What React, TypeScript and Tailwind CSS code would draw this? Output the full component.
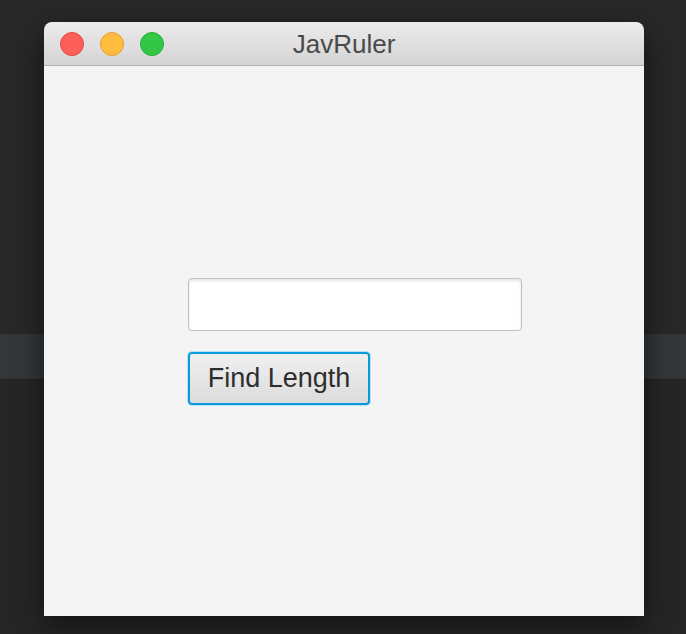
import React from "react";

export default function App() {
  return (
    <div className="relative w-[686px] h-[634px] overflow-hidden bg-[#282828]" style={{ fontFamily: '"Liberation Sans", Arial, sans-serif' }}>
      <div className="flex flex-col h-full">
        <div className="h-[334px] bg-[#282828]" />
        <div className="h-[46px] bg-[#33373a] border-b border-[#1f2122]" />
        <div className="flex-1 bg-[#262626]" />
      </div>
      <div className="absolute left-[44px] top-[22px] w-[600px] h-[594px] flex flex-col rounded-t-[8px] overflow-hidden shadow-[0_10px_30px_rgba(0,0,0,0.55)]">
        <div className="relative h-[44px] shrink-0 flex items-center bg-gradient-to-b from-[#ececec] to-[#d4d4d4] border-b border-[#b3b3b3]">
          <div className="flex items-center gap-[16px] pl-[16px]">
            <div className="w-[24px] h-[24px] rounded-full bg-[#fc5f58] border border-[#e2463f]" />
            <div className="w-[24px] h-[24px] rounded-full bg-[#febd3f] border border-[#e1a22c]" />
            <div className="w-[24px] h-[24px] rounded-full bg-[#33c748] border border-[#25ab34]" />
          </div>
          <div className="absolute inset-0 flex items-center justify-center text-[26px] text-[#4a4a4a] leading-none pt-[1px]">
            JavRuler
          </div>
        </div>
        <div className="flex-1 bg-[#f4f4f4] flex flex-col items-start pl-[144px] pt-[212px]">
          <div className="w-[334px] h-[53px] rounded-[4px] border border-[#bfbfbf] bg-white shadow-[inset_0_2px_3px_rgba(0,0,0,0.10)]" />
          <button className="mt-[21px] w-[182px] h-[53px] rounded-[4px] border-2 border-[#0a9bdc] bg-gradient-to-b from-[#f0f0f0] to-[#dcdcdc] text-[27px] text-[#2e2e2e] leading-none flex items-center justify-center shadow-[0_0_0_1px_rgba(120,200,240,0.45)]">
            Find Length
          </button>
        </div>
      </div>
    </div>
  );
}
